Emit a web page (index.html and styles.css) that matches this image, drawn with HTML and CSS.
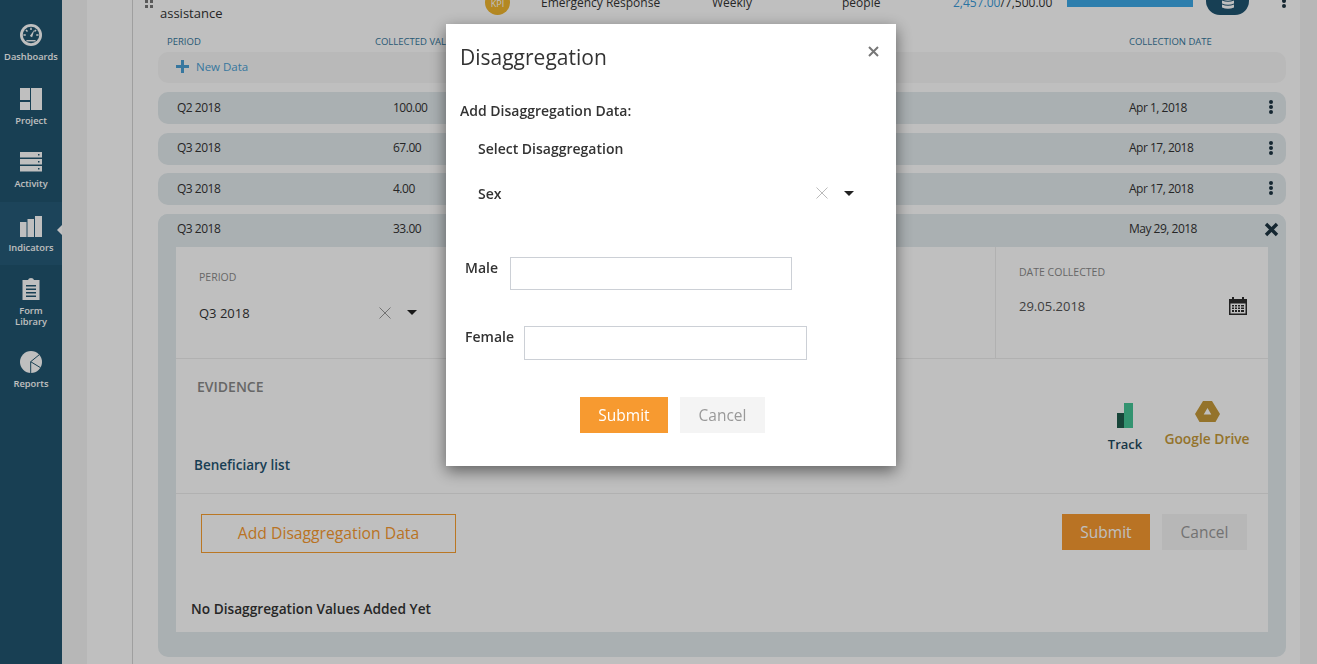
FILE: index.html
```html
<!DOCTYPE html>
<html lang="en">

<head>
    <meta charset="UTF-8">
    <title>Disaggregation</title>
    <link rel="stylesheet" href="styles.css">
</head>

<body>
    <div class="app">
        <nav class="sidebar">
            <a class="nav-item" href="javascript:;">
                <svg class="nav-icon" viewBox="0 0 24 24">
                    <circle cx="12" cy="12" r="12" fill="#fff" />
                    <circle cx="12" cy="12" r="9" fill="#20556f" />
                    <path d="M12 4v2.500M6.500 6.500l1.700 1.700M17.500 6.500l-1.700 1.700M3.800 12h2.500M17.700 12h2.500" stroke="#fff" stroke-width="1.600" />
                    <path d="M15.800 6L10.800 13l2.400 1.500z" fill="#fff" />
                    <path d="M7 17.500h10V19H7z" fill="#fff" />
                </svg>
                <span>Dashboards</span>
            </a>
            <a class="nav-item" href="javascript:;">
                <svg class="nav-icon" viewBox="0 0 22 22">
                    <path d="M0 0h10v12H0zM0 14h10v8H0zM11 0h11v22H11z" fill="#fff" />
                </svg>
                <span>Project</span>
            </a>
            <a class="nav-item" href="javascript:;">
                <svg class="nav-icon" viewBox="0 0 22 22">
                    <path fill-rule="evenodd" d="M0 1h22v5.500H0zM18 3v1.500h1.500V3zM0 8h22v5.500H0zM18 10v1.500h1.500V10zM0 15h22v5.500H0zM18 17v1.500h1.500V17z" fill="#fff" />
                </svg>
                <span>Activity</span>
            </a>
            <a class="nav-item active" href="javascript:;">
                <svg class="nav-icon" viewBox="0 0 22 22">
                    <path d="M0 7h6.500v15H0zM7.500 4H14v18H7.500zM15 1h7v21h-7z" fill="#fff" />
                </svg>
                <span>Indicators</span>
            </a>
            <a class="nav-item nav-item-tall" href="javascript:;">
                <svg class="nav-icon" viewBox="0 0 22 22">
                    <path fill-rule="evenodd" d="M2.500 2H8q.5-2 3-2t3 2h5.500v20h-17zM6 7v1.500h10V7zM6 10.500V12h10v-1.500zM6 14v1.500h10V14zM6 17.500V19h10v-1.500z" fill="#fff" />
                </svg>
                <span>Form<br>Library</span>
            </a>
            <a class="nav-item" href="javascript:;">
                <svg class="nav-icon" viewBox="0 0 22 22">
                    <circle cx="11" cy="11" r="11" fill="#fff" />
                    <path d="M19.500 3.500L10.700 10.700l9.800 6M10.700 10.700V22" fill="none" stroke="#20556f" stroke-width="1" />
                </svg>
                <span>Reports</span>
            </a>
        </nav>

        <main class="main">
            <div class="panel">
                <div class="list">
                    <div class="summary">
                        <span class="handle"></span>
                        <span class="summary-name">assistance</span>
                        <span class="kpi">KPI</span>
                        <span>Emergency Response</span>
                        <span>Weekly</span>
                        <span>people</span>
                        <span class="amount"><b>2,457.00</b>/7,500.00</span>
                        <span class="bar"></span>
                        <span class="db-btn">
                            <svg width="12" height="14" viewBox="0 0 12 14">
                                <path d="M0 1.500Q6-1 12 1.500v3Q6 7 0 4.500zM0 5.500Q6 8 12 5.500v3Q6 11 0 8.500zM0 9.500Q6 12 12 9.500v3Q6 15 0 12.500z" fill="#fff" />
                            </svg>
                        </span>
                        <span class="kebab"><i></i><i></i><i></i></span>
                    </div>

                    <div class="table-head">
                        <span class="head-period">PERIOD</span>
                        <span class="head-value">COLLECTED VALUE</span>
                        <span class="head-date">COLLECTION DATE</span>
                    </div>

                    <div class="new-row">
                        <svg width="13" height="13" viewBox="0 0 13 13">
                            <path d="M5 0h3v5h5v3H8v5H5V8H0V5h5z" fill="#4a9fd4" />
                        </svg>
                        <span>New Data</span>
                    </div>

                    <div class="row">
                        <span class="cell-period">Q2 2018</span>
                        <span class="cell-value">100.00</span>
                        <span class="cell-date">Apr 1, 2018</span>
                        <span class="kebab"><i></i><i></i><i></i></span>
                    </div>
                    <div class="row">
                        <span class="cell-period">Q3 2018</span>
                        <span class="cell-value">67.00</span>
                        <span class="cell-date">Apr 17, 2018</span>
                        <span class="kebab"><i></i><i></i><i></i></span>
                    </div>
                    <div class="row">
                        <span class="cell-period">Q3 2018</span>
                        <span class="cell-value">4.00</span>
                        <span class="cell-date">Apr 17, 2018</span>
                        <span class="kebab"><i></i><i></i><i></i></span>
                    </div>

                    <div class="expanded">
                        <div class="row row-open">
                            <span class="cell-period">Q3 2018</span>
                            <span class="cell-value">33.00</span>
                            <span class="cell-date">May 29, 2018</span>
                            <svg class="close-row" width="15" height="15" viewBox="0 0 15 15">
                                <path d="M2 2l11 11M13 2L2 13" stroke="#1d3442" stroke-width="3.400" />
                            </svg>
                        </div>
                        <div class="detail">
                            <div class="detail-top">
                                <div class="period-col">
                                    <div class="field-label">PERIOD</div>
                                    <div class="select-line">
                                        <span class="period-value">Q3 2018</span>
                                        <svg class="clear" width="12" height="12" viewBox="0 0 12 12">
                                            <path d="M.5.5l11 11M11.500.5l-11 11" stroke="#999" stroke-width="1" />
                                        </svg>
                                        <span class="caret"></span>
                                    </div>
                                </div>
                                <div class="date-col">
                                    <div class="field-label">DATE COLLECTED</div>
                                    <div class="date-line">
                                        <span>29.05.2018</span>
                                        <svg width="18" height="18" viewBox="0 0 18 18">
                                            <path fill-rule="evenodd" d="M0 2h3V0h2v2h8V0h2v2h3v16H0zM1.500 6.500V16.500h15V6.500zM3 8h2v1.500H3zM6 8h2v1.500H6zM9 8h2v1.500H9zM12 8h3v1.500h-3zM3 10.500h2V12H3zM6 10.500h2V12H6zM9 10.500h2V12H9zM12 10.500h3V12h-3zM3 13h2v2H3zM6 13h2v2H6zM9 13h2v2H9zM12 13h3v2h-3z" fill="#2c2c2c" />
                                        </svg>
                                    </div>
                                </div>
                            </div>
                            <div class="evidence">
                                <div class="evidence-text">
                                    <div class="evidence-title">EVIDENCE</div>
                                    <div class="evidence-file">Beneficiary list</div>
                                </div>
                                <div class="source source-track">
                                    <svg width="16" height="26" viewBox="0 0 16 26">
                                        <path d="M0 10h8v15H0z" fill="#1f5c4d" />
                                        <path d="M7 0h9v25H7z" fill="#45c496" />
                                    </svg>
                                    <span>Track</span>
                                </div>
                                <div class="source source-drive">
                                    <svg width="25" height="22" viewBox="0 0 25 22">
                                        <path fill-rule="evenodd" d="M8 0h9l8 13-4.500 8H4.500L0 13zM12.500 7L8.700 13.500h7.600z" fill="#c69a3a" />
                                    </svg>
                                    <span>Google Drive</span>
                                </div>
                            </div>
                            <div class="actions">
                                <a class="btn-outline" href="javascript:;">Add Disaggregation Data</a>
                                <div class="btn-pair">
                                    <a class="btn btn-submit" href="javascript:;">Submit</a>
                                    <a class="btn btn-cancel" href="javascript:;">Cancel</a>
                                </div>
                            </div>
                            <div class="no-values">No Disaggregation Values Added Yet</div>
                        </div>
                    </div>
                </div>
            </div>
        </main>
    </div>

    <div class="overlay">
        <div class="modal">
            <div class="modal-head">
                <h2>Disaggregation</h2>
                <svg class="modal-close" width="11" height="11" viewBox="0 0 11 11">
                    <path d="M1 1l9 9M10 1l-9 9" stroke="#777" stroke-width="2" />
                </svg>
            </div>
            <div class="modal-sub">Add Disaggregation Data:</div>
            <div class="modal-select-label">Select Disaggregation</div>
            <div class="modal-select">
                <span>Sex</span>
                <svg class="clear" width="12" height="12" viewBox="0 0 12 12">
                    <path d="M.5.5l11 11M11.500.5l-11 11" stroke="#bbb" stroke-width="1" />
                </svg>
                <span class="caret"></span>
            </div>
            <div class="input-row input-male">
                <label>Male</label>
                <input type="text">
            </div>
            <div class="input-row input-female">
                <label>Female</label>
                <input type="text">
            </div>
            <div class="modal-buttons">
                <a class="btn btn-submit" href="javascript:;">Submit</a>
                <a class="btn btn-cancel" href="javascript:;">Cancel</a>
            </div>
        </div>
    </div>
</body>

</html>
```
FILE: styles.css
```css
* {
    box-sizing: border-box;
}

body {
    margin: 0;
    font-size: 12px;
    font-family: "Open Sans", "Noto Sans", Arial, sans-serif;
    color: #333;
}

a {
    text-decoration: none;
}

.app {
    display: flex;
    height: 664px;
    overflow: hidden;
}

/* left menu */
.sidebar {
    width: 62px;
    flex: none;
    padding-top: 11px;
    background: #20556f;
}

.nav-item {
    position: relative;
    display: flex;
    flex-direction: column;
    align-items: center;
    height: 63.5px;
    padding-top: 13px;
    color: #fff;
    font-size: 9.3px;
    font-weight: 600;
    line-height: 10.5px;
    text-align: center;
}

.nav-item-tall {
    height: 72.5px;
}

.nav-item.active {
    background: #265b78;
}

.nav-item.active::after {
    content: "";
    position: absolute;
    top: 23px;
    right: 0;
    border: 5px solid transparent;
    border-left: 0;
    border-right-color: #fff;
}

.nav-icon {
    width: 22px;
    height: 22px;
    margin-bottom: 6px;
}

.main {
    flex: 1;
    padding: 0 17px 0 25px;
    background: #f4f4f4;
}

.panel {
    height: 100%;
    padding-left: 45px;
    background: #fff;
}

.list {
    height: 100%;
    padding: 0 14px 0 25px;
    border-left: 1px solid #d4d4d4;
}

/* the row of the indicator, scrolled almost out of sight */
.summary {
    display: grid;
    grid-template-columns: 15px 325px 56px 171px 130px 111px 114px 139px 76px auto;
    align-items: start;
    height: 34px;
    margin: 0 -14px 0 -13px;
    font-size: 12px;
    line-height: 14px;
}

.summary>span {
    margin-top: -4px;
}

.summary .handle {
    width: 8px;
    height: 8px;
    margin-top: 0;
    background: conic-gradient(#777 0 0) 0 0/3px 3px no-repeat,
        conic-gradient(#777 0 0) 5px 0/3px 3px no-repeat,
        conic-gradient(#777 0 0) 0 5px/3px 3px no-repeat,
        conic-gradient(#777 0 0) 5px 5px/3px 3px no-repeat;
}

.summary .summary-name {
    margin-top: 6px;
    font-size: 13px;
}

.summary .kpi {
    width: 25px;
    height: 25px;
    margin-top: -10px;
    padding-top: 8px;
    border-radius: 50%;
    background: #f0b62e;
    color: #fff;
    font-size: 9px;
    line-height: 12px;
    text-align: center;
}

.amount {
    white-space: nowrap;
}

.amount b {
    color: #3a9ad9;
    font-weight: 400;
}

.summary .bar {
    width: 126px;
    height: 7px;
    margin-top: 0;
    background: #3ca9e7;
}

.summary .db-btn {
    display: flex;
    justify-content: center;
    align-items: flex-start;
    width: 43px;
    height: 15px;
    margin-top: 0;
    border-radius: 0 0 14px 14px;
    background: #1f5471;
    overflow: hidden;
}

.db-btn svg {
    margin-top: -5px;
}

.summary .kebab {
    margin-top: -6px;
}

.kebab {
    display: flex;
    flex-direction: column;
    gap: 1px;
}

.kebab i {
    width: 4px;
    height: 4px;
    border-radius: 50%;
    background: #1d3442;
}

.table-head {
    display: flex;
    height: 18px;
    padding-top: 2px;
    color: #35779c;
    font-size: 9.5px;
    font-weight: 500;
    line-height: 12px;
}

.head-period {
    width: 208px;
    margin-left: 9px;
}

.head-value {
    width: 754px;
}

.new-row {
    display: flex;
    align-items: center;
    gap: 7px;
    height: 31px;
    margin-bottom: 9px;
    padding: 0 0 2px 18px;
    border-radius: 10px;
    background: #f7f7f7;
    color: #4a9fd4;
    font-size: 11.5px;
}

.row {
    display: flex;
    align-items: center;
    height: 32px;
    margin-bottom: 8.5px;
    padding: 0 0 2px 19px;
    border-radius: 10px;
    background: #e3ebee;
    font-size: 12px;
    letter-spacing: -.5px;
}

.cell-period {
    width: 216px;
}

.cell-value {
    width: 736px;
}

.cell-date {
    width: 140px;
}

.expanded {
    height: 443px;
    border-radius: 10px;
    background: #e3ebee;
}

.row-open {
    height: 33px;
    margin-bottom: 0;
    padding-bottom: 3px;
}

.row-open .cell-date {
    width: 135px;
}

.close-row {
    margin-top: 1px;
}

.detail {
    height: 385px;
    margin: 0 18px;
    background: #fff;
}

.detail-top {
    display: flex;
    justify-content: space-between;
    height: 112px;
    border-bottom: 1px solid #ececec;
}

.period-col {
    width: 250px;
    padding: 23px 0 0 23px;
}

.field-label {
    color: #8a8a8a;
    font-size: 10.5px;
    line-height: 14px;
}

.select-line {
    display: flex;
    align-items: center;
    height: 20px;
    margin-top: 19px;
    font-size: 13px;
}

.period-value {
    width: 180px;
}

.select-line .clear {
    margin-right: 16px;
}

.caret {
    width: 0;
    height: 0;
    border: 5.500px solid transparent;
    border-top: 5.500px solid #222;
    border-bottom: 0;
}

.date-col {
    width: 273px;
    padding: 18px 21px 0 23px;
    border-left: 1px solid #ececec;
}

.date-line {
    display: flex;
    justify-content: space-between;
    align-items: center;
    margin-top: 18px;
    font-size: 13px;
    color: #555;
}

.evidence {
    display: flex;
    align-items: flex-start;
    height: 135px;
    border-bottom: 1px solid #ececec;
}

.evidence-text {
    flex: 1;
    padding: 19px 0 0 18px;
}

.evidence-title {
    margin-left: 3px;
    color: #8a8a8a;
    font-size: 14px;
    font-weight: 600;
    line-height: 18px;
}

.evidence-file {
    margin-top: 60px;
    color: #1f5471;
    font-size: 13.500px;
    font-weight: 600;
    line-height: 18px;
}

.source {
    display: flex;
    flex-direction: column;
    align-items: center;
    font-weight: 600;
}

.source-track {
    width: 50px;
    margin-left: 2px;
    padding-top: 44px;
    color: #1f4a5e;
    font-size: 13px;
    line-height: 18px;
}

.source-track svg {
    margin-bottom: 6px;
}

.source-drive {
    width: 90px;
    margin: 0 16px 0 12px;
    padding-top: 42px;
    color: #c69a3a;
    font-size: 13.800px;
    line-height: 18px;
}

.source-drive svg {
    margin-bottom: 7px;
}

.actions {
    display: flex;
    justify-content: space-between;
    align-items: flex-start;
    height: 106px;
    padding: 20px 21px 0 25px;
}

.btn-outline {
    display: block;
    width: 255px;
    height: 39px;
    border: 1px solid #f99f30;
    color: #f79a30;
    font-size: 15.700px;
    line-height: 37px;
    text-align: center;
}

.btn-pair {
    display: flex;
    gap: 12px;
}

.btn {
    display: block;
    height: 36px;
    font-size: 15.500px;
    line-height: 36px;
    text-align: center;
}

.btn-submit {
    width: 88px;
    background: #f79a30;
    color: #fff;
}

.btn-cancel {
    width: 85px;
    background: #f4f4f4;
    color: #999;
}

.no-values {
    padding-left: 15px;
    font-size: 13.700px;
    font-weight: 600;
    line-height: 18px;
}

/* dialog */
.overlay {
    position: fixed;
    top: 0;
    right: 0;
    bottom: 0;
    left: 0;
    padding: 24px 0 0 446px;
    background: rgba(0, 0, 0, .25);
}

.modal {
    width: 450px;
    height: 442px;
    padding: 0 14px;
    background: #fff;
    box-shadow: 0 5px 15px rgba(0, 0, 0, .5);
    font-weight: 600;
    font-size: 14px;
}

.modal-head {
    display: flex;
    justify-content: space-between;
    height: 78px;
}

.modal-head h2 {
    margin: 16px 0 0;
    font-size: 21px;
    font-weight: 400;
    line-height: 34px;
    color: #333;
}

.modal-close {
    margin: 22px 3px 0 0;
}

.modal-sub {
    height: 18px;
    line-height: 18px;
}

.modal-select-label {
    margin: 20px 0 0 18px;
    line-height: 18px;
}

.modal-select {
    display: flex;
    align-items: center;
    height: 20px;
    margin: 25px 0 0 18px;
}

.modal-select>span:first-child {
    width: 338px;
}

.modal-select .clear {
    margin-right: 16px;
}

.input-row {
    display: flex;
    align-items: flex-start;
    margin-left: 5px;
}

.input-row label {
    line-height: 18px;
    margin-top: 2px;
}

.input-row input {
    display: block;
    border: 1px solid #ccd0d6;
    border-radius: 0;
    background: #fff;
}

.input-male {
    margin-top: 54px;
}

.input-male label {
    width: 45px;
}

.input-male input {
    width: 282px;
    height: 33px;
}

.input-female {
    margin-top: 36px;
}

.input-female label {
    width: 59px;
}

.input-female input {
    width: 283px;
    height: 34px;
}

.modal-buttons {
    display: flex;
    gap: 12px;
    margin: 37px 0 0 120px;
    font-weight: 400;
}
```
